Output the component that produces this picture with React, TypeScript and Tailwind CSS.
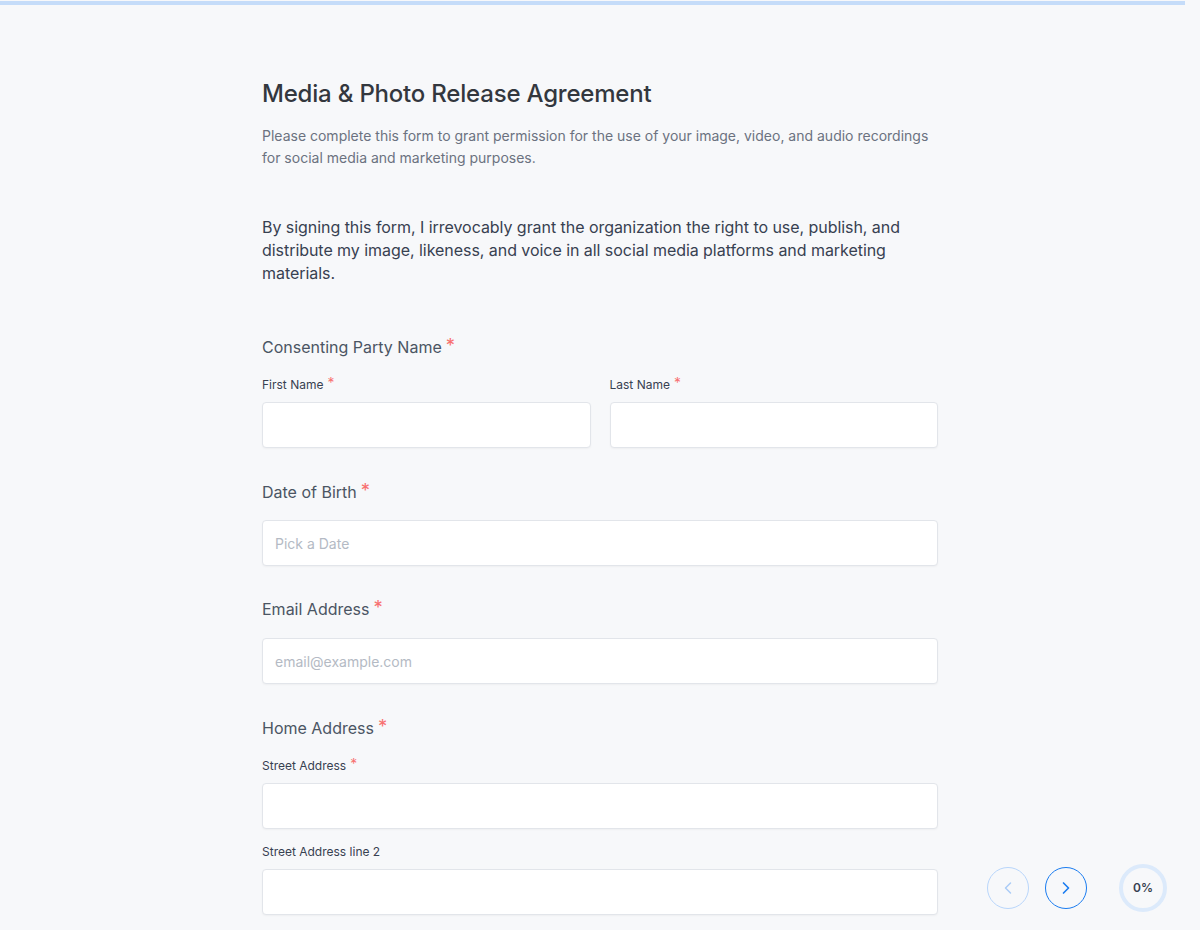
import { ChevronLeft, ChevronRight } from 'lucide-react';

const font = { fontFamily: 'Inter, "Liberation Sans", sans-serif' };

function Req() {
  return <span className="ml-1 text-[1.15em] leading-none text-[#f87171] relative top-[-1px]">*</span>;
}

function Input({ placeholder }: { placeholder?: string }) {
  return (
    <input
      placeholder={placeholder}
      className="w-full h-[46px] bg-white border border-[#e2e5ea] rounded-[4px] px-3 text-[14px] text-[#374151] placeholder:text-[#b4bac4] shadow-[0_1px_2px_rgba(0,0,0,0.04)] outline-none"
    />
  );
}

export default function App() {
  return (
    <div className="min-h-[930px] bg-[#f7f8fa] relative overflow-hidden" style={font}>
      {/* progress bar */}
      <div className="pt-px">
        <div className="h-[4px] w-[1185px] bg-[#c5dcf9]" />
      </div>

      <div className="w-[676px] mx-auto pt-[73px] pb-10">
        <h1 className="text-[24px] leading-[32px] font-[550] text-[#33373e] tracking-[-0.2px]">
          Media &amp; Photo Release Agreement
        </h1>
        <p className="mt-[15px] text-[14px] leading-[22px] text-[#6b7280]">
          Please complete this form to grant permission for the use of your image, video, and audio recordings for social media and marketing purposes.
        </p>

        <p className="mt-[47px] text-[16px] leading-[23px] text-[#374151] pr-[20px] tracking-[-0.05px]">
          By signing this form, I irrevocably grant the organization the right to use, publish, and distribute my image, likeness, and voice in all social media platforms and marketing materials.
        </p>

        <div className="mt-[50px]">
          <div className="text-[16px] leading-[24px] text-[#4b5563]">
            Consenting Party Name<Req />
          </div>
          <div className="mt-[18px] grid grid-cols-2 gap-[19px]">
            <div>
              <div className="text-[12px] leading-[16px] text-[#374151] mb-[9px]">
                First Name<Req />
              </div>
              <Input />
            </div>
            <div>
              <div className="text-[12px] leading-[16px] text-[#374151] mb-[9px]">
                Last Name<Req />
              </div>
              <Input />
            </div>
          </div>
        </div>

        <div className="mt-[32px]">
          <div className="text-[16px] leading-[24px] text-[#4b5563] mb-[16px]">
            Date of Birth<Req />
          </div>
          <Input placeholder="Pick a Date" />
        </div>

        <div className="mt-[31px]">
          <div className="text-[16px] leading-[24px] text-[#4b5563] mb-[17px]">
            Email Address<Req />
          </div>
          <Input placeholder="email@example.com" />
        </div>

        <div className="mt-[32px]">
          <div className="text-[16px] leading-[24px] text-[#4b5563]">
            Home Address<Req />
          </div>
          <div className="mt-[18px] text-[12px] leading-[16px] text-[#374151] mb-[9px]">
            Street Address<Req />
          </div>
          <Input />
          <div className="mt-[15px] text-[12px] leading-[16px] text-[#374151] mb-[9px]">
            Street Address line 2
          </div>
          <Input />
        </div>
      </div>

      {/* floating navigation */}
      <div className="absolute left-[987px] top-[867px] flex items-center gap-[16px]">
        <button className="w-[42px] h-[42px] rounded-full border border-[#b9d6fb] flex items-center justify-center text-[#a9cbf7]">
          <ChevronLeft size={20} strokeWidth={1.75} />
        </button>
        <button className="w-[42px] h-[42px] rounded-full border border-[#1a7cf0] flex items-center justify-center text-[#1a7cf0]">
          <ChevronRight size={20} strokeWidth={2} />
        </button>
      </div>
      <div className="absolute left-[1119px] top-[864px] w-[48px] h-[48px] rounded-full border-[4px] border-[#dceafb] flex items-center justify-center text-[12px] font-semibold text-[#374151]">
        0%
      </div>
    </div>
  );
}
